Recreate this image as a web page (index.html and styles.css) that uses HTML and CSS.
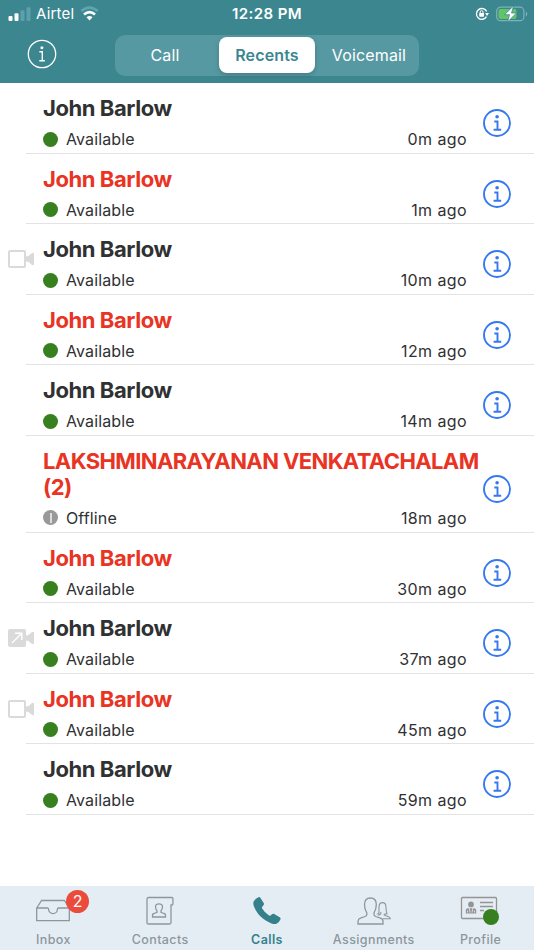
FILE: index.html
```
<!DOCTYPE html>
<html lang="en">
<head>
<meta charset="utf-8">
<title>Recents</title>
<link rel="stylesheet" href="styles.css">
</head>
<body>
<svg class="defs" aria-hidden="true">
  <symbol id="info" viewBox="0 0 28 28">
    <circle cx="14" cy="14" r="13" fill="none" stroke="currentColor" stroke-width="1.9"/>
    <circle cx="14.1" cy="7.7" r="1.8" fill="currentColor"/>
    <path d="M11.3 12.500h3.200v8M10.600 20.700h7.600" fill="none" stroke="currentColor" stroke-width="1.900"/>
  </symbol>
  <symbol id="video" viewBox="0 0 26 18">
    <rect x="1" y="1" width="16" height="16" rx="1" fill="none" stroke="#dadada" stroke-width="2"/>
    <path d="M18 6.200h2.200L24 3q2-.9 2 .8v10.400q0 1.700-2 .8l-3.800-3.200H18z" fill="#dadada"/>
  </symbol>
  <symbol id="video-out" viewBox="0 0 26 18">
    <rect width="18" height="18" rx="2" fill="#dadada"/>
    <path d="M18 6.200h2.200L24 3q2-.9 2 .8v10.400q0 1.700-2 .8l-3.800-3.200H18z" fill="#dadada"/>
    <path d="M4 14L13.500 4.500M7 4.200h6.800V11" fill="none" stroke="#fff" stroke-width="1.400"/>
  </symbol>
</svg>
<header class="top">
  <div class="status">
    <div class="carrier">
      <svg width="23" height="14" viewBox="0 0 23 14"><g fill="#fff"><rect x="0.500" y="9" width="4" height="5" rx="1"/><rect x="6.500" y="6.200" width="4" height="7.800" rx="1"/></g><g fill="#5ba0aa"><rect x="12.500" y="3.200" width="4" height="10.800" rx="1"/><rect x="18.500" y="0.300" width="4" height="13.700" rx="1"/></g></svg>
      <span>Airtel</span>
      <svg class="wifi" width="19" height="15" viewBox="0 0 19 15"><path d="M1.300 5.100Q9.500-2 17.700 5.100" fill="none" stroke="#5ba6b0" stroke-width="2.600"/><path d="M4 8.500q5.500-4.800 11 0" fill="none" stroke="#fff" stroke-width="2.700"/><path d="M6.500 11.300q3-2.500 6 0L9.500 14.500z" fill="#fff"/></svg>
    </div>
    <time>12:28 PM</time>
    <div class="power">
      <svg width="14" height="14" viewBox="0 0 14 14"><path d="M11.700 4.500A5.400 5.400 0 1 0 11.500 9.700" fill="none" stroke="#fff" stroke-width="1.300"/><path d="M10.100 6h3.900L12 9z" fill="#fff"/><rect x="4.200" y="6" width="4.800" height="3.700" rx=".6" fill="#fff"/><path d="M5.200 6.500V5a1.400 1.400 0 0 1 2.800 0v1.500" fill="none" stroke="#fff"/></svg>
      <svg width="32" height="16" viewBox="0 0 32 16"><rect x=".7" y="1.200" width="27.200" height="13.500" rx="3.800" fill="none" stroke="#7db2ba" stroke-width="1.200"/><path d="M29.800 5.500q3.200 2.500 0 5z" fill="#7db2ba"/><rect x="2.500" y="3" width="18" height="10" rx="2" fill="#63c466"/><path d="M17.700-.2L8.500 8.700h5L11.500 16 20.500 7h-5z" fill="#fff" stroke="#3c8690" stroke-width=".8"/></svg>
    </div>
  </div>
  <div class="nav">
    <svg class="about" viewBox="0 0 30 30"><circle cx="15" cy="15" r="13.700" fill="none" stroke="#fff" stroke-width="1.300"/><circle cx="14.900" cy="8.700" r="1.500" fill="#fff"/><path d="M12.300 12.800h3v8.300M12.300 21.700h5.500" fill="none" stroke="#fff" stroke-width="1.400"/></svg>
    <div class="tabs"><span>Call</span><span class="selected">Recents</span><span>Voicemail</span></div>
  </div>
</header>
<main class="list">
  <article class="row"><div class="kind"></div><div class="body"><h2>John Barlow</h2><div class="meta"><i class="dot"></i><span>Available</span><time>0m ago</time></div><svg class="info"><use href="#info"/></svg></div></article>
  <article class="row missed"><div class="kind"></div><div class="body"><h2>John Barlow</h2><div class="meta"><i class="dot"></i><span>Available</span><time>1m ago</time></div><svg class="info"><use href="#info"/></svg></div></article>
  <article class="row"><div class="kind"><svg><use href="#video"/></svg></div><div class="body"><h2>John Barlow</h2><div class="meta"><i class="dot"></i><span>Available</span><time>10m ago</time></div><svg class="info"><use href="#info"/></svg></div></article>
  <article class="row missed"><div class="kind"></div><div class="body"><h2>John Barlow</h2><div class="meta"><i class="dot"></i><span>Available</span><time>12m ago</time></div><svg class="info"><use href="#info"/></svg></div></article>
  <article class="row"><div class="kind"></div><div class="body"><h2>John Barlow</h2><div class="meta"><i class="dot"></i><span>Available</span><time>14m ago</time></div><svg class="info"><use href="#info"/></svg></div></article>
  <article class="row missed long"><div class="kind"></div><div class="body"><h2>LAKSHMINARAYANAN VENKATACHALAM<br>(2)</h2><div class="meta"><i class="dot offline"></i><span>Offline</span><time>18m ago</time></div><svg class="info"><use href="#info"/></svg></div></article>
  <article class="row missed"><div class="kind"></div><div class="body"><h2>John Barlow</h2><div class="meta"><i class="dot"></i><span>Available</span><time>30m ago</time></div><svg class="info"><use href="#info"/></svg></div></article>
  <article class="row"><div class="kind"><svg><use href="#video-out"/></svg></div><div class="body"><h2>John Barlow</h2><div class="meta"><i class="dot"></i><span>Available</span><time>37m ago</time></div><svg class="info"><use href="#info"/></svg></div></article>
  <article class="row missed"><div class="kind"><svg><use href="#video"/></svg></div><div class="body"><h2>John Barlow</h2><div class="meta"><i class="dot"></i><span>Available</span><time>45m ago</time></div><svg class="info"><use href="#info"/></svg></div></article>
  <article class="row"><div class="kind"></div><div class="body"><h2>John Barlow</h2><div class="meta"><i class="dot"></i><span>Available</span><time>59m ago</time></div><svg class="info"><use href="#info"/></svg></div></article>
</main>
<nav class="bottom">
  <div class="item"><div class="icon">
    <svg width="34" height="30" viewBox="0 0 34 30"><path d="M.7 12L5.600 4.500h22.800L33.300 12v12.700H.7zM.7 12h10.700q1.200 0 1.200 1.300a4.400 4.400 0 0 0 8.800 0q0-1.300 1.200-1.300h10.700"/></svg>
    <b class="badge">2</b></div><span>Inbox</span></div>
  <div class="item"><div class="icon">
    <svg width="30" height="30" viewBox="0 0 30 30"><path d="M3.500 1.500h23.400q1 0 1 1V8q0 1-1 1H26v17.500q0 1.500-1.500 1.500h-21Q2 28 2 26.500V3q0-1.500 1.500-1.500z"/><path d="M7.500 21v-1.800q0-1.300 1.500-1.700l3-1.200v-1.500q-1.500-1.500-1.500-4 0-3 3.500-3t3.500 3q0 2.500-1.500 4v1.500l3 1.200q1.500.4 1.500 1.700V21z"/></svg></div><span>Contacts</span></div>
  <div class="item active"><div class="icon">
    <svg class="solid" width="30" height="30" viewBox="0 0 30 30"><path d="M1.800 5.300Q3.300 2.500 6.500 1.200q1.200-.4 2 .8l3.200 5q.7 1.300-.4 2.500Q9.500 11.300 10 12.300q2.800 4.700 7 7.300 1 .6 2.700-1.200 1.200-1.200 2.500-.4l5.500 3.300q1.300.8.800 2-1.200 3.200-4 4.500-2 .8-5-.4C11.300 24.200 5.300 18.500 2.200 11Q.7 7.500 1.800 5.300z"/></svg></div><span>Calls</span></div>
  <div class="item"><div class="icon">
    <svg width="36" height="30" viewBox="0 0 36 30"><path d="M2 28v-2.600q0-2.400 2.300-3.200l4.900-1.700q1.600-.6 1.600-2v-1.700Q8.500 13.300 8.500 8.500 8.500 2 14.400 2t5.900 6.500q0 4.800-2.300 8.300v1.700q0 1.400 1.600 2l4.900 1.700q2.500.8 2.500 3.200V28z"/><path d="M20.800 18h2q.2-2.500.2-6.500 0-4.900 3.500-4.900t3.500 4.900q0 4 1 6.500h-2.700v1.200l4.300 1.500q1.700.6 1.700 2h-7.500M24.800 16v1.800l-2.300 1.700" stroke-width="1.100"/></svg></div><span>Assignments</span></div>
  <div class="item"><div class="icon profile">
    <svg width="38" height="30" viewBox="0 0 38 30"><g stroke="#949494"><rect x="1.500" y="1.500" width="35" height="21" rx="1"/><path d="M20 6.500h13M20 10.500h13M20 14.500h4" stroke-width="1.300"/></g><g fill="#949494" stroke="none"><circle cx="11" cy="8.400" r="2.900"/><path d="M5.800 17.500v-3.200q0-1.500 1.800-2h6.800q1.800.5 1.800 2v3.200z"/></g><path d="M9.200 12l.8 4.500M12.800 12l-.8 4.500M7.500 14.500v2M14.500 14.500v2" stroke="#e5edf4" stroke-width=".8"/></svg>
    <i class="presence"></i></div><span>Profile</span></div>
</nav>
</body>
</html>
```
FILE: styles.css
```
* { box-sizing: border-box; }
body {
  margin: 0;
  width: 534px;
  height: 950px;
  display: flex;
  flex-direction: column;
  overflow: hidden;
  background: #fff;
  color: #303133;
  font-family: Inter, Roboto, sans-serif;
}
svg { display: block; flex: none; overflow: visible; }
.defs { position: absolute; width: 0; height: 0; }
.top { height: 83px; flex: none; background: #3c8690; color: #fff; }
.status {
  height: 27px;
  padding: 0 8px;
  display: grid;
  grid-template-columns: 1fr auto 1fr;
  align-items: center;
  font-size: 15px;
}
.status time { font-weight: 600; letter-spacing: .4px; }
.carrier { display: flex; align-items: center; letter-spacing: .2px; }
.carrier span { margin-left: 5px; }
.wifi { margin-left: 6px; }
.power { display: flex; align-items: center; justify-content: flex-end; gap: 7px; margin-right: -2px; }
.nav { display: flex; padding: 8px 0 0 27px; }
.about { width: 30px; height: 30px; margin: 4px 57.5px 0 -.5px; }
.tabs {
  width: 304px;
  height: 41px;
  margin-left: 1px;
  padding: 2px 4px 3px;
  display: grid;
  grid-template-columns: 92px 96px 92px;
  gap: 8px;
  background: #5799a2;
  border-radius: 10px;
  font-size: 16px;
}
.tabs span { display: flex; align-items: center; justify-content: center; letter-spacing: .15px; }
.tabs .selected {
  background: #fff;
  color: #3c8690;
  border-radius: 8px;
  font-weight: 600;
  box-shadow: 0 2px 5px rgba(0, 0, 0, .2);
}
.list { flex: 1; min-height: 0; }
.row { display: flex; height: 70.5px; }
.row.long { height: 97px; }
.kind { width: 26px; display: flex; align-items: center; padding-left: 8px; }
.kind svg { width: 26px; height: 18px; }
.body {
  flex: 1;
  display: grid;
  grid-template-columns: 424px auto;
  grid-template-rows: auto 1fr;
  column-gap: 16px;
  padding: 12px 0 0 17px;
  border-bottom: 1px solid #e3e3e5;
}
h2 {
  margin: 0;
  font-size: 22px;
  line-height: 26px;
  font-weight: 700;
  letter-spacing: -.42px;
  white-space: nowrap;
}
.long h2 { letter-spacing: -.61px; }
.missed h2 { color: #e93323; }
.meta {
  grid-row: 2;
  display: flex;
  align-items: center;
  align-self: start;
  height: 20px;
  margin-top: 8px;
  font-size: 16px;
  letter-spacing: .12px;
}
.dot {
  width: 15px;
  height: 15px;
  margin-right: 8px;
  border-radius: 50%;
  background: #38801f;
}
.offline { display: flex; align-items: center; justify-content: center; background: #999; }
.offline::after { content: ""; width: 2px; height: 10px; background: #ddd; }
.meta time { margin-left: auto; letter-spacing: .4px; }
.info {
  grid-column: 2;
  grid-row: 1 / 3;
  align-self: center;
  width: 28px;
  height: 28px;
  margin-bottom: 1.5px;
  color: #3578f0;
}
.bottom {
  height: 64px;
  flex: none;
  display: grid;
  grid-template-columns: repeat(5, 1fr);
  background: #e5edf4;
  color: #8c979d;
}
.item {
  display: flex;
  flex-direction: column;
  align-items: center;
  padding-top: 10px;
  font-size: 12.500px;
  font-weight: 500;
  line-height: 16px;
  letter-spacing: .4px;
}
.icon { position: relative; height: 36px; }
.icon svg { fill: none; stroke: currentColor; stroke-width: 1.3; }
.icon .solid { fill: currentColor; stroke: none; }
.profile { margin-right: 3px; }
.active { color: #34818b; font-weight: 600; }
.badge {
  position: absolute;
  left: 30px;
  top: -6px;
  width: 23px;
  height: 23px;
  border-radius: 50%;
  background: #ea4b3b;
  color: #fff;
  font-size: 16px;
  font-weight: 400;
  line-height: 23px;
  text-align: center;
}
.presence {
  position: absolute;
  left: 23px;
  top: 13px;
  width: 16px;
  height: 16px;
  border-radius: 50%;
  background: #38801f;
}
```
